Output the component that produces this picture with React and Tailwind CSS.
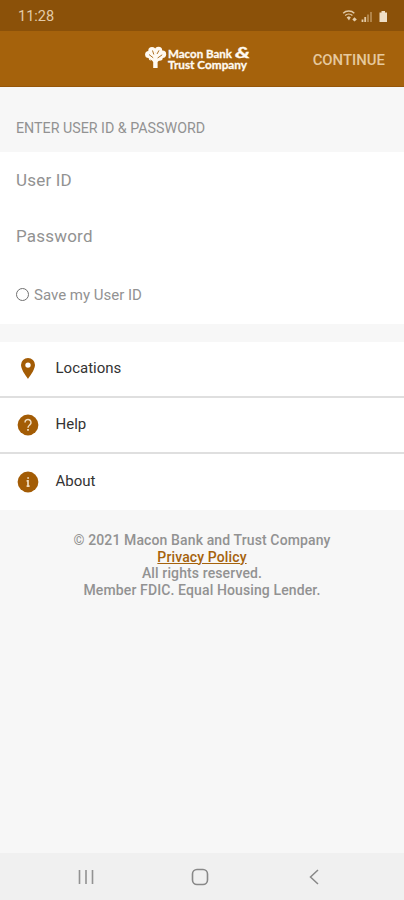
import React from 'react';

const StatusIcons = () => (
    <svg width="50" height="14" viewBox="0 0 50 14" fill="none" aria-hidden="true">
        <path d="M1.2 4.2C4 1.2 9.500 1.200 12.300 4.200M3.200 6.500C5.200 4.700 8.400 4.700 10.400 6.500" stroke="#e3cba8" strokeWidth="1.400" />
        <path d="M4.600 8.200L6.800 7.200L8.800 8.200L7 11.500Z" fill="#e3cba8" />
        <path d="M10.300 10.500L12.500 8.200L14.800 10.500L12.500 12.500Z" fill="#e3cba8" />
        <path d="M20.500 13V10.500M23.200 13V8" stroke="#e3cba8" strokeWidth="1.800" />
        <path d="M26 13V5.500M29 13V3" stroke="#b98d54" strokeWidth="1.700" />
        <path d="M37.500 3.500h2V2h3.500v1.500h2V13h-7.500z" fill="#efdec5" />
    </svg>
);

const Logo = () => (
    <svg width="108" height="30" viewBox="0 0 108 30" role="img" aria-label="Macon Bank & Trust Company">
        <g fill="#fffaf2">
            <circle cx="4.600" cy="11.500" r="3.500" />
            <circle cx="8" cy="7.800" r="3.700" />
            <circle cx="14.500" cy="7.400" r="3.700" />
            <circle cx="18.500" cy="11.200" r="3.700" />
            <circle cx="7.800" cy="14.500" r="3.200" />
            <circle cx="15.600" cy="14.500" r="3.200" />
            <path d="M7 9.500h9v7l-2.400 2.500V25H9.200v-6L6.500 16.500z" />
        </g>
        <path d="M5 11.500l4.200 3.300M8.500 7.500l1.300 4M13 11l2-3.600M13.600 15l4.600-3.200M6.500 17l2 1.300" stroke="#a5620c" strokeWidth="0.900" fill="none" />
        <g fill="#fffaf2" stroke="#fffaf2" strokeWidth="0.300" className="font-['Lato',sans-serif] font-bold">
            <text x="24" y="15" fontSize="11.600" textLength="64" lengthAdjust="spacingAndGlyphs">Macon Bank</text>
            <text x="24" y="26" fontSize="11.600" textLength="79" lengthAdjust="spacingAndGlyphs">Trust Company</text>
            <text x="91" y="14.500" fontSize="14.500" fontStyle="italic" textLength="15" lengthAdjust="spacingAndGlyphs">&amp;</text>
        </g>
    </svg>
);

const PinIcon = () => (
    <svg width="14" height="21" viewBox="0 0 14 21" aria-hidden="true">
        <path fillRule="evenodd" fill="#a35c05" d="M7 0a7 7 0 0 0-7 7c0 5.200 7 13.800 7 13.800S14 12.200 14 7a7 7 0 0 0-7-7zm0 4.400a2.700 2.700 0 1 1 0 5.400 2.700 2.700 0 0 1 0-5.400z" />
    </svg>
);

const HelpIcon = () => (
    <svg width="22" height="22" viewBox="0 0 22 22" fill="none" aria-hidden="true">
        <circle cx="11" cy="11" r="10.400" fill="#a35c05" />
        <path d="M8 8.500a3 3 0 1 1 5 2.200c-1.200 1-2 1.500-2 3" stroke="#f0dcc0" strokeWidth="1.500" />
        <path d="M11 15v1.700" stroke="#f0dcc0" strokeWidth="1.700" />
    </svg>
);

const InfoIcon = () => (
    <svg width="22" height="22" viewBox="0 0 22 22" fill="none" aria-hidden="true">
        <circle cx="11" cy="11" r="10.400" fill="#a35c05" />
        <path d="M9.600 9.800H11v5.200M9.600 15.200h3M10.200 7h1.800" stroke="#f0dcc0" strokeWidth="1.700" />
    </svg>
);

const links = [
    { label: 'Locations', Icon: PinIcon },
    { label: 'Help', Icon: HelpIcon },
    { label: 'About', Icon: InfoIcon }
];

export default function App() {
    return (
        <div className="flex h-[900px] w-[404px] flex-col overflow-hidden bg-[#f7f7f7] font-['Roboto',sans-serif] text-[#929292]">
            <div className="flex h-[31px] shrink-0 items-center justify-between bg-[#8b5109] pl-[18px] pr-[12px] text-[#e3cba8]">
                <span className="pt-[3px] text-[14.5px] leading-none">11:28</span>
                <StatusIcons />
            </div>

            <header className="grid h-[55.500px] shrink-0 grid-cols-[144px_108px_1fr] items-center border-b border-[#96560a] bg-[#a5620c]">
                <span />
                <Logo />
                <button className="justify-self-end pr-[19px] pt-[4px] text-[14.900px] font-medium leading-none text-[#e6c99e]">CONTINUE</button>
            </header>

            <h2 className="flex h-[65.500px] shrink-0 items-center pl-4 pt-[18px] text-[14.250px] leading-none">ENTER USER ID &amp; PASSWORD</h2>

            <form className="h-[172px] shrink-0 bg-white pl-4">
                <div className="flex h-[56px] items-center pt-[2px] text-[17px] tracking-[0.2px]">User ID</div>
                <div className="flex h-[57px] items-center text-[17px] tracking-[0.2px]">Password</div>
                <label className="flex h-[60px] items-center gap-[5px] text-[15px]">
                    <span className="mb-px h-[13px] w-[13px] rounded-full border border-[#707070]" />
                    Save my User ID
                </label>
            </form>

            <nav className="mt-[18px] shrink-0 divide-y-2 divide-[#dfdfdf] bg-white">
                {links.map(({ label, Icon }) => (
                    <div key={label} className="flex h-[56px] items-center pb-px text-[15px] text-[#333333]">
                        <span className="flex w-[55.500px] justify-center">
                            <Icon />
                        </span>
                        {label}
                    </div>
                ))}
            </nav>

            <footer className="flex-1 pt-[22px] text-center text-[14px] font-medium leading-[16.500px] tracking-[0.120px]">
                <p>© 2021 Macon Bank and Trust Company</p>
                <p className="text-[#a5620c] underline">Privacy Policy</p>
                <p>All rights reserved.</p>
                <p>Member FDIC. Equal Housing Lender.</p>
            </footer>

            <div className="grid h-[47px] shrink-0 grid-cols-[114px_114px_114px] items-center justify-center bg-[#f0f0f0] pr-[4px]">
                <svg className="justify-self-center" width="16" height="16" viewBox="0 0 16 16" stroke="#929292" strokeWidth="1.600">
                    <path d="M1.500 1v14M8 1v14M14.500 1v14" />
                </svg>
                <svg className="justify-self-center" width="18" height="18" viewBox="0 0 18 18" fill="none" stroke="#888888" strokeWidth="1.600">
                    <rect x="1.500" y="1.500" width="15" height="15" rx="4.500" />
                </svg>
                <svg className="justify-self-center" width="10" height="16" viewBox="0 0 10 16" fill="none" stroke="#888888" strokeWidth="1.500">
                    <path d="M9 1L1.500 8L9 15" />
                </svg>
            </div>
        </div>
    );
}
